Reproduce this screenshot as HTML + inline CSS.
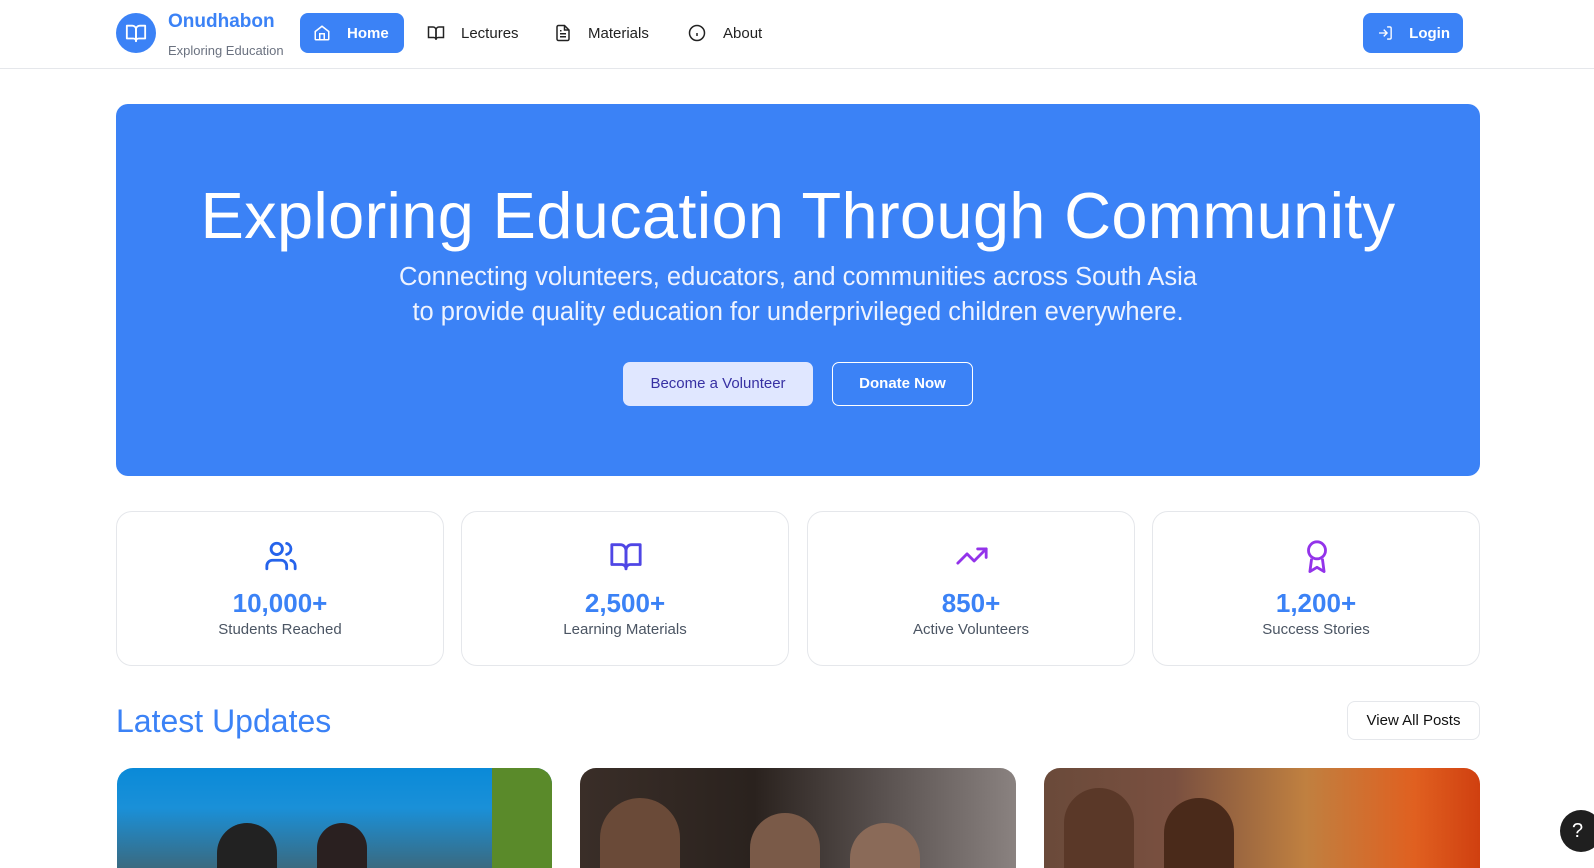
<!DOCTYPE html>
<html><head><meta charset="utf-8"><style>
*{box-sizing:border-box;margin:0;padding:0}
body{width:1594px;height:860px;overflow:hidden;background:#fff;font-family:"Liberation Sans",sans-serif;position:relative;color:#222}
.abs{position:absolute}
nav{position:absolute;left:0;top:0;width:1594px;height:69px;border-bottom:1px solid #e5e7eb}
.logo{left:116px;top:13px;width:40px;height:40px;border-radius:50%;background:#3b82f6;display:flex;align-items:center;justify-content:center}
.brand{left:168px;top:11px;font-size:19px;font-weight:bold;color:#3b82f6}
.tag{left:168px;top:43px;font-size:13px;color:#6b7280}
.navitem{top:13px;height:40px;display:flex;align-items:center;font-size:15px;color:#222}
.btn{background:#3b82f6;color:#fff;border-radius:8px;font-weight:bold;padding:0 13px}
.hero{left:116px;top:104px;width:1364px;height:372px;background:#3b82f6;border-radius:12px;color:#fff;text-align:center}
.hero h1{position:absolute;left:0;right:0;top:74px;font-size:65px;font-weight:normal;letter-spacing:0.3px}
.hero p{position:absolute;left:0;right:0;top:156px;font-size:25.5px;line-height:35px;color:#eef3ff}
.b1{left:507px;top:258px;width:190px;height:44px;background:#e0e7ff;color:#3730a3;border-radius:7px;font-size:15px;line-height:44px}
.b2{left:716px;top:258px;width:141px;height:44px;border:1.5px solid #fff;color:#fff;border-radius:7px;font-size:15px;line-height:41px;font-weight:bold}
.card{top:511px;width:328px;height:155px;border:1px solid #e5e7eb;border-radius:16px;text-align:center}
.card svg{position:absolute;left:147px;top:27px}
.num{position:absolute;left:0;right:0;top:76px;font-size:26px;font-weight:bold;color:#3b82f6}
.lbl{position:absolute;left:0;right:0;top:109px;font-size:15px;color:#4b5563}
.img{top:768px;height:100px;border-radius:16px 16px 0 0;overflow:hidden}
</style></head><body>
<nav>
<div class="abs logo"><svg width="22" height="22" viewBox="0 0 24 24" fill="none" stroke="#fff" stroke-width="2" stroke-linejoin="round"><path d="M2 4h6a4 4 0 0 1 4 4v13a3 3 0 0 0-3-3H2z"/><path d="M22 4h-6a4 4 0 0 0-4 4v13a3 3 0 0 1 3-3h7z"/></svg></div>
<div class="abs brand">Onudhabon</div>
<div class="abs tag">Exploring Education</div>
<div class="abs navitem btn" style="left:300px;width:104px"><svg width="18" height="18" viewBox="0 0 24 24" fill="none" stroke="#fff" stroke-width="2"><path d="M3 10l9-7 9 7v10a1 1 0 0 1-1 1H4a1 1 0 0 1-1-1z"/><path d="M9 21v-8h6v8"/></svg><span style="margin-left:16px">Home</span></div>
<div class="abs navitem" style="left:427px"><svg width="18" height="18" viewBox="0 0 24 24" fill="none" stroke="#222" stroke-width="2"><path d="M2 4h6a4 4 0 0 1 4 4v13a3 3 0 0 0-3-3H2z"/><path d="M22 4h-6a4 4 0 0 0-4 4v13a3 3 0 0 1 3-3h7z"/></svg><span style="margin-left:16px">Lectures</span></div>
<div class="abs navitem" style="left:554px"><svg width="18" height="18" viewBox="0 0 24 24" fill="none" stroke="#222" stroke-width="2"><path d="M14 2H6a2 2 0 0 0-2 2v16a2 2 0 0 0 2 2h12a2 2 0 0 0 2-2V8z"/><path d="M14 2v6h6M8 13h8M8 17h8M8 9h2"/></svg><span style="margin-left:16px">Materials</span></div>
<div class="abs navitem" style="left:688px"><svg width="18" height="18" viewBox="0 0 24 24" fill="none" stroke="#222" stroke-width="2"><circle cx="12" cy="12" r="10"/><path d="M12 16v-4M12 8h.01"/></svg><span style="margin-left:17px">About</span></div>
<div class="abs navitem btn" style="left:1363px;width:100px;padding-left:14px"><svg width="18" height="18" viewBox="0 0 24 24" fill="none" stroke="#fff" stroke-width="2"><path d="M15 3h4a2 2 0 0 1 2 2v14a2 2 0 0 1-2 2h-4M10 17l5-5-5-5M15 12H3"/></svg><span style="margin-left:16px">Login</span></div>
</nav>
<div class="abs hero">
<h1>Exploring Education Through Community</h1>
<p>Connecting volunteers, educators, and communities across South Asia<br>to provide quality education for underprivileged children everywhere.</p>
<div class="abs b1">Become a Volunteer</div>
<div class="abs b2">Donate Now</div>
</div>
<div class="abs card" style="left:116px"><svg width="34" height="34" viewBox="0 0 24 24" fill="none" stroke="#2563eb" stroke-width="2" stroke-linecap="round"><path d="M16 21v-2a4 4 0 0 0-4-4H6a4 4 0 0 0-4 4v2"/><circle cx="9" cy="7" r="4"/><path d="M22 21v-2a4 4 0 0 0-3-3.87M16 3.13a4 4 0 0 1 0 7.75"/></svg><div class="num">10,000+</div><div class="lbl">Students Reached</div></div>
<div class="abs card" style="left:461px"><svg width="34" height="34" viewBox="0 0 24 24" fill="none" stroke="#4f46e5" stroke-width="2" stroke-linejoin="round"><path d="M2 4h6a4 4 0 0 1 4 4v13a3 3 0 0 0-3-3H2z"/><path d="M22 4h-6a4 4 0 0 0-4 4v13a3 3 0 0 1 3-3h7z"/></svg><div class="num">2,500+</div><div class="lbl">Learning Materials</div></div>
<div class="abs card" style="left:807px"><svg width="34" height="34" viewBox="0 0 24 24" fill="none" stroke="#9333ea" stroke-width="2" stroke-linecap="round" stroke-linejoin="round"><path d="M22 7l-8.5 8.5-5-5L2 17"/><path d="M16 7h6v6"/></svg><div class="num">850+</div><div class="lbl">Active Volunteers</div></div>
<div class="abs card" style="left:1152px"><svg width="34" height="34" viewBox="0 0 24 24" fill="none" stroke="#9333ea" stroke-width="2" stroke-linejoin="round"><circle cx="12" cy="8" r="6"/><path d="M8.2 13.9L7 23l5-3 5 3-1.2-9.1"/></svg><div class="num">1,200+</div><div class="lbl">Success Stories</div></div>
<div class="abs" style="left:116px;top:703px;font-size:32px;color:#3b82f6">Latest Updates</div>
<div class="abs" style="left:1347px;top:701px;width:133px;height:39px;border:1px solid #e5e7eb;border-radius:8px;font-size:15px;line-height:37px;text-align:center;color:#111">View All Posts</div>
<div class="abs img" style="left:117px;width:435px;background:linear-gradient(180deg,#0a8ad8 0%,#1a90d8 40%,#3a6a80 100%)"><div class="abs" style="right:0;top:0;width:60px;height:100px;background:#5a8a2a"></div><div class="abs" style="left:100px;top:55px;width:60px;height:45px;border-radius:30px 30px 0 0;background:#222"></div><div class="abs" style="left:200px;top:55px;width:50px;height:45px;border-radius:25px 25px 0 0;background:#2a2020"></div></div>
<div class="abs img" style="left:580px;width:436px;background:linear-gradient(90deg,#3a2e28 0%,#2a221e 40%,#5a5250 70%,#8a8280 100%)"><div class="abs" style="left:20px;top:30px;width:80px;height:70px;border-radius:40px 40px 0 0;background:#6a4a38"></div><div class="abs" style="left:170px;top:45px;width:70px;height:55px;border-radius:35px 35px 0 0;background:#7a5a48"></div><div class="abs" style="left:270px;top:55px;width:70px;height:45px;border-radius:35px 35px 0 0;background:#8a6a58"></div></div>
<div class="abs img" style="left:1044px;width:436px;background:linear-gradient(90deg,#6a4a3a 0%,#7a5040 30%,#c08040 60%,#e06020 85%,#d04010 100%)"><div class="abs" style="left:20px;top:20px;width:70px;height:80px;border-radius:35px 35px 0 0;background:#5a3828"></div><div class="abs" style="left:120px;top:30px;width:70px;height:70px;border-radius:35px 35px 0 0;background:#4a2a1a"></div></div>
<div class="abs" style="left:1560px;top:810px;width:42px;height:42px;border-radius:50%;background:#1f1f1f;color:#fff;font-size:20px;line-height:42px;padding-left:12px">?</div>
</body></html>
